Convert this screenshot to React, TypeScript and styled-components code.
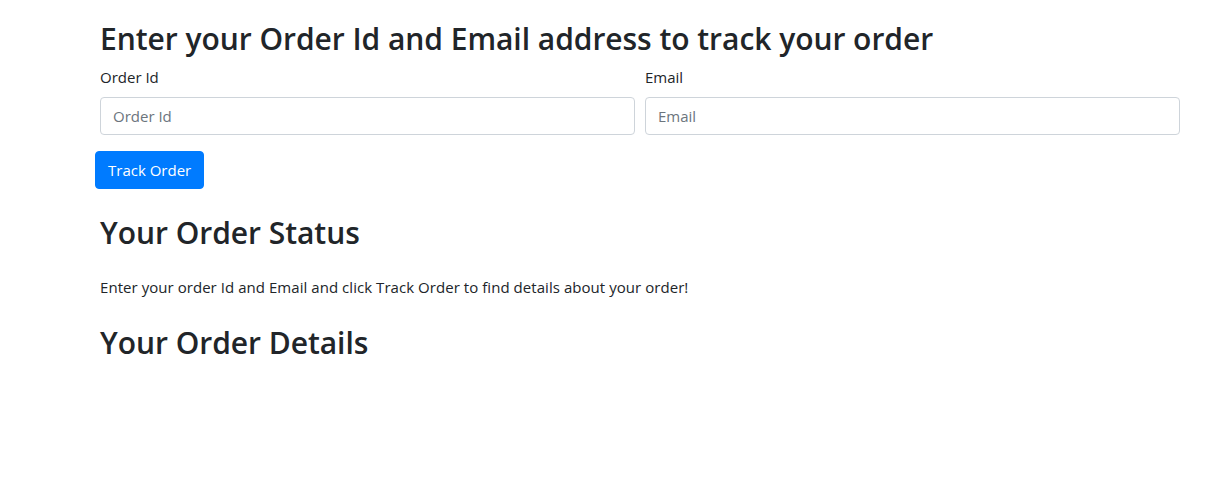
import React from "react";
import styled, { createGlobalStyle } from "styled-components";

const GlobalStyle = createGlobalStyle`
  html, body {
    margin: 0;
    padding: 0;
    background: #ffffff;
  }
  body {
    font-family: "Open Sans", "Noto Sans", "Liberation Sans", sans-serif;
    font-size: 15px;
    line-height: 24px;
    color: #212529;
  }
  * { box-sizing: border-box; }
`;

const Page = styled.main`
  width: 1080px;
  margin-left: 100px;
  padding-top: 19px;
`;

const Title = styled.h2<{ $top?: number }>`
  margin: ${(p) => p.$top ?? 0}px 0 6.5px;
  padding-top: 1px;
  font-size: 30px;
  font-weight: 600;
  letter-spacing: -0.04px;
  line-height: 38.4px;
`;

const FormRow = styled.div`
  display: grid;
  grid-template-columns: 1fr 1fr;
  column-gap: 10px;
  margin-bottom: 16px;
`;

const Field = styled.div`
  display: flex;
  flex-direction: column;
`;

const Label = styled.label`
  display: block;
  margin-bottom: 8px;
  font-size: 15px;
  line-height: 24px;
`;

const Input = styled.input`
  display: block;
  width: 100%;
  height: 38px;
  padding: 6px 12px;
  font-family: inherit;
  font-size: 15px;
  line-height: 24px;
  color: #495057;
  background: #fff;
  border: 1px solid #ced4da;
  border-radius: 4px;
  outline: none;
  &::placeholder {
    color: #6c757d;
    opacity: 1;
  }
`;

const Button = styled.button`
  display: inline-block;
  margin-left: -5px;
  height: 38px;
  padding: 6px 12px;
  font-family: inherit;
  font-size: 15px;
  line-height: 24px;
  color: #fff;
  background: #007bff;
  border: 1px solid #007bff;
  border-radius: 4px;
  cursor: pointer;
`;

const Text = styled.p`
  margin: 23px 0 24px;
  font-size: 15px;
  line-height: 24px;
  letter-spacing: 0.05px;
`;

export default function App() {
  return (
    <>
      <GlobalStyle />
      <Page>
        <Title>Enter your Order Id and Email address to track your order</Title>
        <FormRow>
          <Field>
            <Label htmlFor="orderId">Order Id</Label>
            <Input id="orderId" placeholder="Order Id" />
          </Field>
          <Field>
            <Label htmlFor="email">Email</Label>
            <Input id="email" placeholder="Email" />
          </Field>
        </FormRow>
        <Button type="button">Track Order</Button>
        <Title $top={24}>Your Order Status</Title>
        <Text>Enter your order Id and Email and click Track Order to find details about your order!</Text>
        <Title>Your Order Details</Title>
      </Page>
    </>
  );
}
